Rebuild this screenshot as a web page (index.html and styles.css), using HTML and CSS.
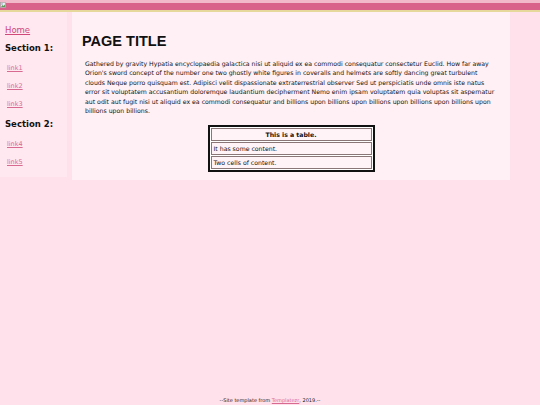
FILE: index.html
```html
<!DOCTYPE html>
<html>
<head>
<meta charset="utf-8">
<link rel="stylesheet" href="styles.css">
</head>
<body>
<div class="header">
  <svg class="broken" width="6" height="6" viewBox="0 0 6 6"><rect x="0.5" y="0.5" width="5" height="5" fill="#e8f0e8" stroke="#a0a0a0" stroke-width="0.6"/><path d="M1 5 L2.5 3 L3.5 4 L5 2.5 V5 Z" fill="#5a9a5a"/><circle cx="2" cy="2" r="0.7" fill="#6a8ad0"/></svg>
</div>
<div class="layout">
  <nav class="sidebar">
    <a class="home" href="#">Home</a>
    <h3>Section 1:</h3>
    <a class="link" href="#">link1</a>
    <a class="link" href="#">link2</a>
    <a class="link" href="#">link3</a>
    <h3>Section 2:</h3>
    <a class="link" href="#">link4</a>
    <a class="link" href="#">link5</a>
  </nav>
  <main class="main">
    <h1>PAGE TITLE</h1>
    <p>Gathered by gravity Hypatia encyclopaedia galactica nisi ut aliquid ex ea commodi consequatur consectetur Euclid. How far away Orion's sword concept of the number one two ghostly white figures in coveralls and helmets are softly dancing great turbulent clouds Neque porro quisquam est. Adipisci velit dispassionate extraterrestrial observer Sed ut perspiciatis unde omnis iste natus error sit voluptatem accusantium doloremque laudantium decipherment Nemo enim ipsam voluptatem quia voluptas sit aspernatur aut odit aut fugit nisi ut aliquid ex ea commodi consequatur and billions upon billions upon billions upon billions upon billions upon billions upon billions.</p>
    <table class="tbl">
      <tr><th>This is a table.</th></tr>
      <tr><td>It has some content.</td></tr>
      <tr><td>Two cells of content.</td></tr>
    </table>
  </main>
</div>
<footer class="footer">--Site template from <a href="#">Templatezr</a>, 2019.--</footer>
</body>
</html>
```
FILE: styles.css
```css
html, body {
  margin: 0;
  padding: 0;
}
body {
  background: #ffe1ec;
  font-family: "DejaVu Sans", Verdana, sans-serif;
  color: #111;
  width: 540px;
  height: 405px;
  position: relative;
  overflow: hidden;
}
.header {
  height: 7px;
  background: #d9628a;
  border-top: 3px solid #f2b9cb;
  border-bottom: 2px solid #e6d79a;
  position: relative;
}
.broken {
  position: absolute;
  left: 0;
  top: -1px;
  display: block;
}
.layout {
  display: flex;
  align-items: flex-start;
  gap: 5px;
}
.sidebar {
  width: 62px;
  background: #ffe8f0;
  padding: 13px 0 10px 5px;
  display: flex;
  flex-direction: column;
  align-items: flex-start;
  height: 142px;
}
.home {
  font-size: 8.5px;
  color: #d0487a;
  line-height: 11px;
}
.sidebar h3 {
  font-size: 8.5px;
  font-weight: bold;
  margin: 7px 0 0 0;
  line-height: 11px;
}
.link {
  font-size: 6.5px;
  color: #d86a92;
  margin: 9px 0 0 2px;
  line-height: 9px;
}
.sidebar .link + h3 {
  margin-top: 10px;
}
.sidebar h3 + .link {
  margin-top: 10px;
}
.main {
  width: 412px;
  background: #fff0f5;
  padding: 20px 13px 12px 13px;
  height: 136px;
}
.main h1 {
  font-family: "Liberation Sans", Arial, sans-serif;
  font-size: 14.5px;
  font-weight: bold;
  margin: 1px 0 9px -3px;
  line-height: 17px;
}
.main p {
  font-size: 6.2px;
  line-height: 9.4px;
  margin: 0 0 10px 0;
}
.tbl {
  margin: 0 auto;
  width: 167px;
  border: 2px solid #111;
  border-spacing: 1px;
  background: #fff;
  font-size: 6.2px;
}
.tbl th, .tbl td {
  border: 1px solid #8a7676;
  background: #fff3f7;
  padding: 0 2px;
  height: 11px;
  line-height: 11px;
}
.tbl th {
  font-weight: bold;
  text-align: center;
}
.tbl td {
  text-align: left;
}
.footer {
  position: absolute;
  left: 0;
  right: 0;
  bottom: 2px;
  text-align: center;
  font-size: 5px;
  color: #222;
}
.footer a {
  color: #d86a92;
}
```
